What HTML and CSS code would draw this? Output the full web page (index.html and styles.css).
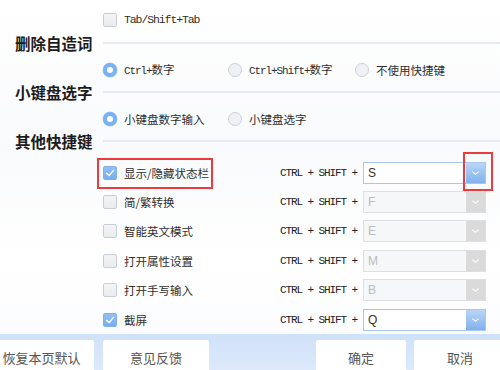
FILE: index.html
```html
<!DOCTYPE html>
<html lang="zh-CN">
<head>
<meta charset="utf-8">
<title>快捷键设置</title>
<link rel="stylesheet" href="styles.css">
</head>
<body>
<div class="page">
  <div class="content">
    <div class="opt-row first">
      <span class="check"></span><span class="lbl mono">Tab/Shift+Tab</span>
    </div>

    <div class="head"><h2 class="title">删除自造词</h2><span class="line"></span></div>
    <div class="opt-row radios">
      <label class="ropt"><span class="radio on"></span><span class="lbl"><span class="mono">Ctrl+</span>数字</span></label>
      <label class="ropt"><span class="radio"></span><span class="lbl"><span class="mono">Ctrl+Shift+</span>数字</span></label>
      <label class="ropt"><span class="radio"></span><span class="lbl">不使用快捷键</span></label>
    </div>

    <div class="head"><h2 class="title">小键盘选字</h2><span class="line"></span></div>
    <div class="opt-row radios">
      <label class="ropt"><span class="radio on"></span><span class="lbl">小键盘数字输入</span></label>
      <label class="ropt"><span class="radio"></span><span class="lbl">小键盘选字</span></label>
    </div>

    <div class="head"><h2 class="title">其他快捷键</h2><span class="line"></span></div>
    <div class="shortcuts">
      <div class="sc-row">
        <div class="sc-name"><span class="check on"><svg viewBox="0 0 14 14"><polyline points="3,7.2 6,10 11,4" /></svg></span><span class="lbl">显示/隐藏状态栏</span><span class="mark mark-name"></span></div>
        <span class="sc-keys mono">CTRL + SHIFT +</span>
        <div class="select on"><span class="val">S</span><span class="btn"><svg viewBox="0 0 10 6"><polyline points="1.5,1.5 5,4.5 8.5,1.5" /></svg></span><span class="mark mark-btn"></span></div>
      </div>
      <div class="sc-row">
        <div class="sc-name"><span class="check"></span><span class="lbl">简/繁转换</span></div>
        <span class="sc-keys mono">CTRL + SHIFT +</span>
        <div class="select"><span class="val">F</span><span class="btn"><svg viewBox="0 0 10 6"><polyline points="1.5,1.5 5,4.5 8.5,1.5" /></svg></span></div>
      </div>
      <div class="sc-row">
        <div class="sc-name"><span class="check"></span><span class="lbl">智能英文模式</span></div>
        <span class="sc-keys mono">CTRL + SHIFT +</span>
        <div class="select"><span class="val">E</span><span class="btn"><svg viewBox="0 0 10 6"><polyline points="1.5,1.5 5,4.5 8.5,1.5" /></svg></span></div>
      </div>
      <div class="sc-row">
        <div class="sc-name"><span class="check"></span><span class="lbl">打开属性设置</span></div>
        <span class="sc-keys mono">CTRL + SHIFT +</span>
        <div class="select"><span class="val">M</span><span class="btn"><svg viewBox="0 0 10 6"><polyline points="1.5,1.5 5,4.5 8.5,1.5" /></svg></span></div>
      </div>
      <div class="sc-row">
        <div class="sc-name"><span class="check"></span><span class="lbl">打开手写输入</span></div>
        <span class="sc-keys mono">CTRL + SHIFT +</span>
        <div class="select"><span class="val">B</span><span class="btn"><svg viewBox="0 0 10 6"><polyline points="1.5,1.5 5,4.5 8.5,1.5" /></svg></span></div>
      </div>
      <div class="sc-row">
        <div class="sc-name"><span class="check on"><svg viewBox="0 0 14 14"><polyline points="3,7.2 6,10 11,4" /></svg></span><span class="lbl">截屏</span></div>
        <span class="sc-keys mono">CTRL + SHIFT +</span>
        <div class="select on"><span class="val">Q</span><span class="btn"><svg viewBox="0 0 10 6"><polyline points="1.5,1.5 5,4.5 8.5,1.5" /></svg></span></div>
      </div>
    </div>
  </div>

  <div class="bottom">
    <div class="group">
      <button class="b b-reset">恢复本页默认</button>
      <button class="b b-feedback">意见反馈</button>
    </div>
    <div class="group">
      <button class="b b-ok">确定</button>
      <button class="b b-cancel">取消</button>
    </div>
  </div>
</div>
</body>
</html>
```

FILE: styles.css
```css
* { box-sizing: border-box; }
html, body { margin: 0; padding: 0; }
body {
  width: 500px;
  height: 370px;
  overflow: hidden;
  background: #ffffff;
  font-family: "Noto Sans CJK SC", "Noto Sans", sans-serif;
  color: #2b2b2b;
}
.page {
  width: 500px;
  height: 370px;
  display: flex;
  flex-direction: column;
  background: linear-gradient(180deg, #ffffff 0%, #f9fafc 40%, #ffffff 70%, #fafbfd 100%);
}
.content {
  flex: 1;
  display: flex;
  flex-direction: column;
  padding-top: 7px;
}
.mono {
  font-family: "Liberation Mono", "DejaVu Sans Mono", monospace;
  font-size: 11px;
  letter-spacing: -1.1px;
}
.lbl {
  font-size: 11.5px;
  line-height: 14px;
  color: #2e2e2e;
  white-space: nowrap;
}
.opt-row {
  display: flex;
  align-items: center;
  padding-left: 103px;
}
.opt-row.first { height: 26px; gap: 7px; }
.opt-row.radios { height: 29px; padding-top: 5px; }
.ropt {
  display: flex;
  align-items: center;
  gap: 7px;
  width: 125px;
}
.ropt:nth-child(2) { width: 127px; }

.head {
  height: 20px;
  display: flex;
  align-items: center;
}
.title {
  margin: 0;
  width: 103px;
  padding-left: 15px;
  font-size: 15.5px;
  font-weight: 700;
  color: #1c1c1c;
  line-height: 20px;
  white-space: nowrap;
}
.line {
  flex: 1;
  height: 2px;
  background: #e6eaf2;
}

.check {
  width: 14px;
  height: 14px;
  flex: none;
  border: 1px solid #c6ceda;
  border-radius: 2px;
  background: linear-gradient(180deg, #f3f4f6, #e9ebee);
  display: flex;
  align-items: center;
  justify-content: center;
}
.check.on {
  border-color: #7fb0ec;
  background: linear-gradient(180deg, #93c0f4, #78aef0);
}
.check svg { width: 14px; height: 14px; }
.check svg polyline {
  fill: none;
  stroke: #ffffff;
  stroke-width: 1.6;
  stroke-linecap: round;
  stroke-linejoin: round;
}
.radio {
  width: 14px;
  height: 14px;
  flex: none;
  border-radius: 50%;
  border: 1px solid #c8d1de;
  background: #eff1f4;
}
.radio.on {
  border: 4px solid #7ab2f1;
  background: #ffffff;
  box-shadow: 0 0 0 0.5px #a8cdf6;
}

.shortcuts {
  padding-top: 7px;
  display: flex;
  flex-direction: column;
}
.sc-row {
  height: 29.4px;
  display: flex;
  align-items: center;
  padding-left: 103px;
}
.sc-name {
  position: relative;
  width: 177px;
  display: flex;
  align-items: center;
  gap: 7px;
}
.sc-keys {
  width: 83px;
  color: #222;
  white-space: nowrap;
}
.select {
  position: relative;
  width: 123px;
  height: 22px;
  display: flex;
  border: 1px solid #dcdfe3;
  background: #f5f7f8;
}
.select .val {
  flex: 1;
  padding-left: 4px;
  font-family: "Liberation Sans", "DejaVu Sans", sans-serif;
  font-size: 12px;
  line-height: 20px;
  color: #b9bdc1;
}
.select .btn {
  width: 19px;
  height: 20px;
  background: #dadada;
  display: flex;
  align-items: center;
  justify-content: center;
}
.select .btn svg { width: 9px; height: 6px; }
.select .btn polyline {
  fill: none;
  stroke: #ffffff;
  stroke-width: 1.2;
}
.select.on {
  border-color: #a8c7ef;
  background: #ffffff;
}
.select.on .val { color: #3a2f28; }
.select.on .btn {
  background: linear-gradient(180deg, #b9d5f6, #80b2ee);
}

.mark {
  position: absolute;
  border: 2px solid #ec3a3f;
  pointer-events: none;
}
.mark-name {
  left: -6px;
  top: -8px;
  width: 116px;
  height: 31px;
}
.mark-btn {
  left: 99px;
  top: -11px;
  width: 30px;
  height: 39px;
}

.bottom {
  height: 36px;
  padding-top: 6px;
  display: flex;
  justify-content: space-between;
  background: linear-gradient(180deg, #cfe1f8, #dde9fb);
}
.group {
  display: flex;
  gap: 9px;
}
.group + .group { gap: 8px; }
.b {
  border: none;
  margin: 0;
  background: #ffffff;
  border-radius: 2px 2px 0 0;
  font-family: "Noto Sans CJK SC", "Noto Sans", sans-serif;
  font-size: 13px;
  color: #555555;
  height: 30px;
  padding: 4px 0 0;
  display: flex;
  align-items: center;
  justify-content: center;
}
.b-reset { width: 94px; padding-right: 11px; border-radius: 0 2px 0 0; }
.b-feedback { width: 106px; }
.b-ok { width: 90px; }
.b-cancel { width: 86px; padding-left: 6px; border-radius: 2px 0 0 0; }
```
